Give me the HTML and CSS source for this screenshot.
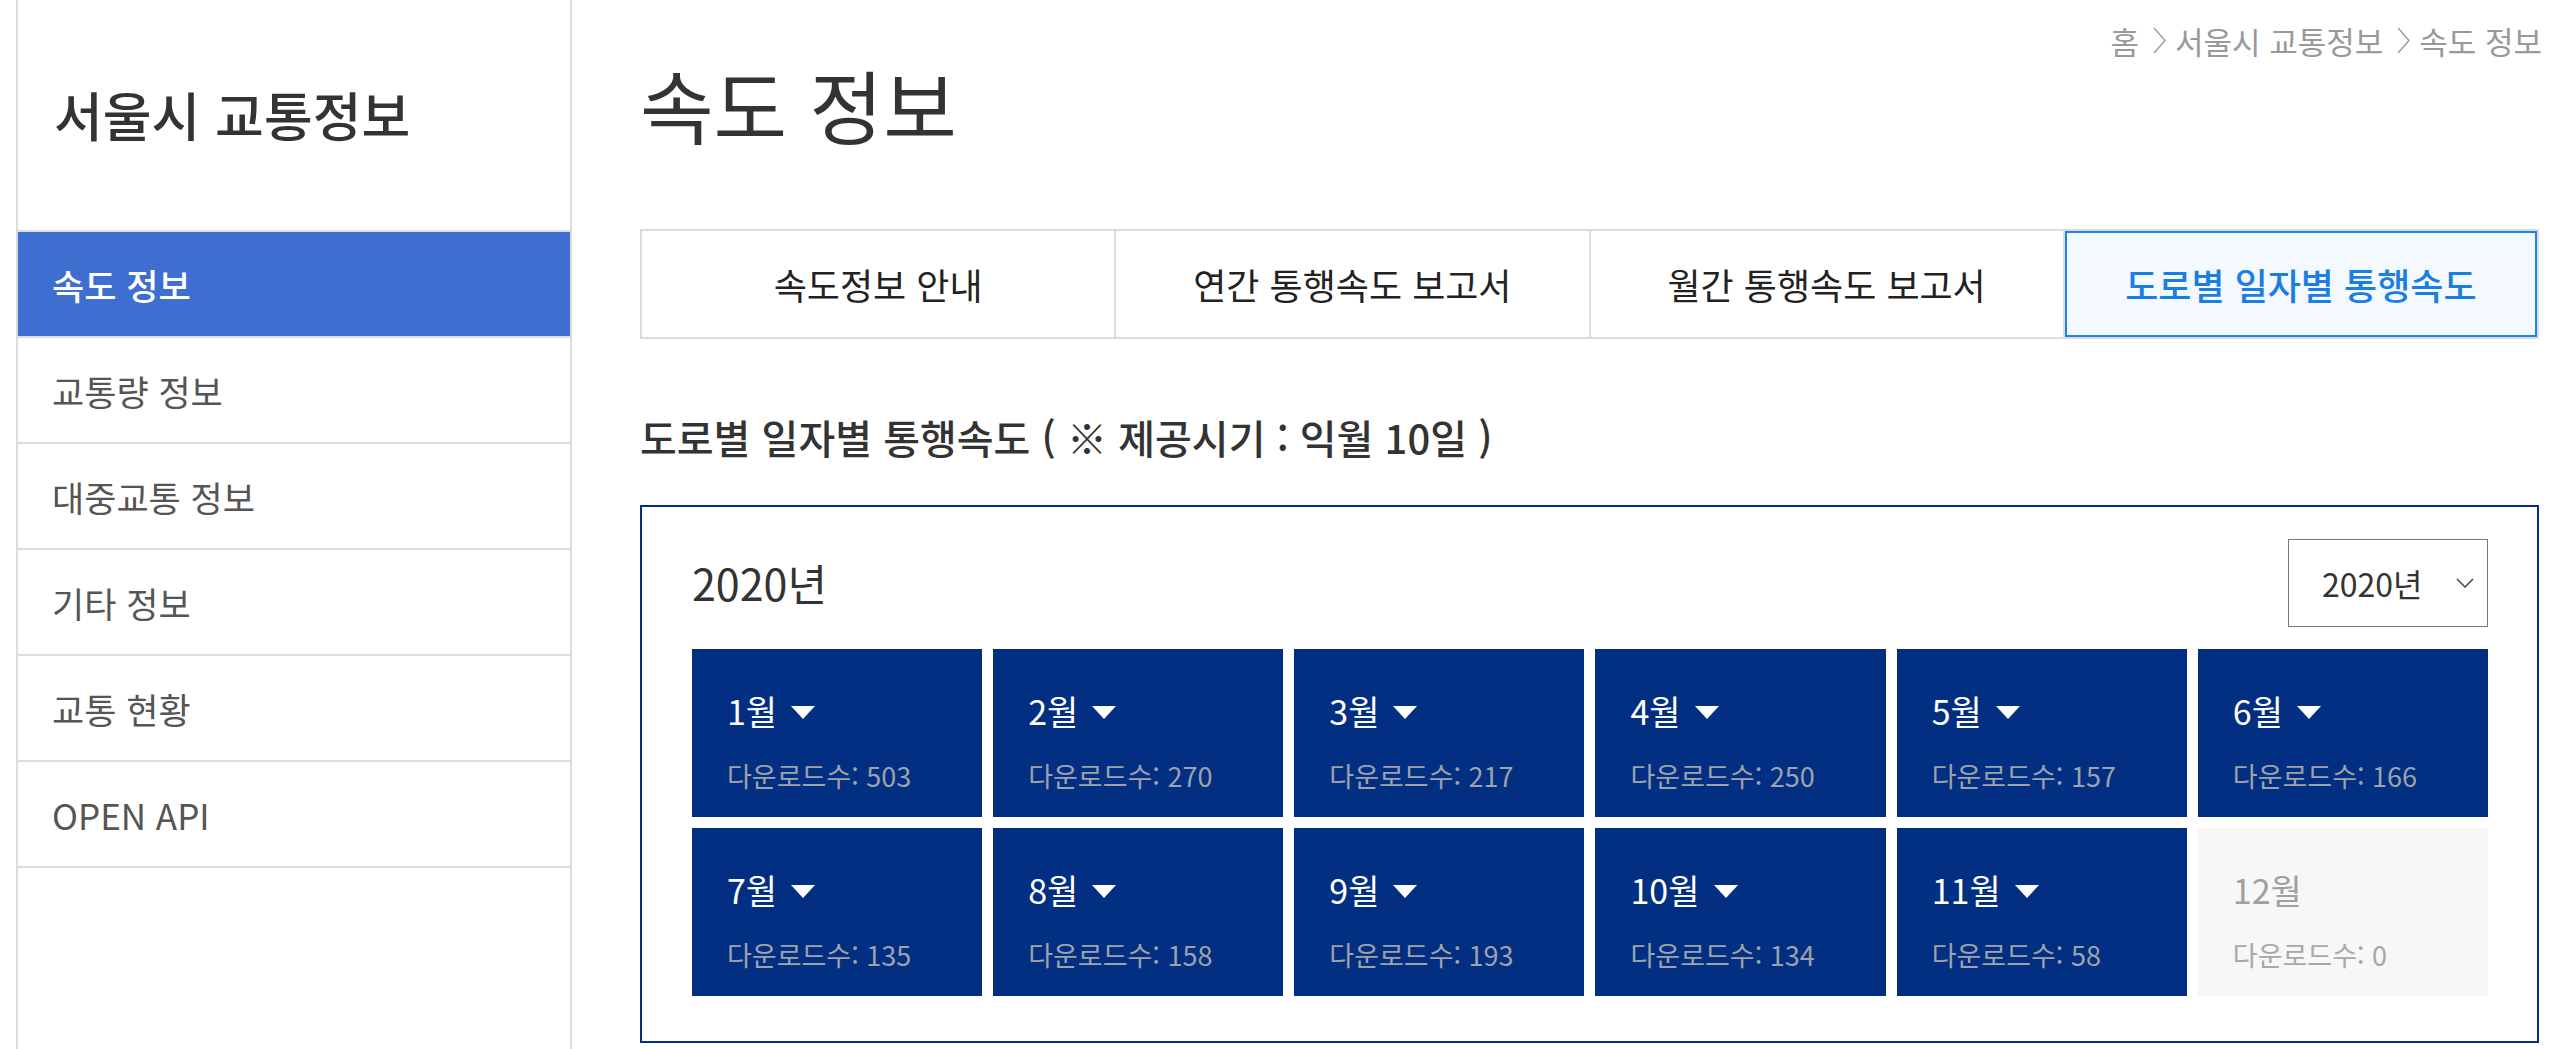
FILE: index.html
```html
<!DOCTYPE html>
<html lang="ko">
<head>
<meta charset="utf-8">
<title>속도 정보 - 서울시 교통정보</title>
<link rel="stylesheet" href="styles.css">
</head>
<body>
<div class="page">
  <aside class="sidebar">
    <div class="side-title"><h2>서울시 교통정보</h2></div>
    <ul class="side-menu">
      <li class="active">속도 정보</li>
      <li>교통량 정보</li>
      <li>대중교통 정보</li>
      <li>기타 정보</li>
      <li>교통 현황</li>
      <li>OPEN API</li>
    </ul>
  </aside>
  <main class="main">
    <div class="head">
      <h1>속도 정보</h1>
      <nav class="crumbs">
        <span>홈</span>
        <svg class="chev" width="13" height="27" viewBox="0 0 13 27"><polyline points="1,1 12,13.5 1,26" fill="none" stroke="#9a9a9a" stroke-width="1.4"/></svg>
        <span>서울시 교통정보</span>
        <svg class="chev" width="13" height="27" viewBox="0 0 13 27"><polyline points="1,1 12,13.5 1,26" fill="none" stroke="#9a9a9a" stroke-width="1.4"/></svg>
        <span>속도 정보</span>
      </nav>
    </div>
    <div class="tabs">
      <div class="tab">속도정보 안내</div>
      <div class="tab">연간 통행속도 보고서</div>
      <div class="tab">월간 통행속도 보고서</div>
      <div class="tab active">도로별 일자별 통행속도</div>
    </div>
    <h3 class="sub">도로별 일자별 통행속도 ( ※ 제공시기 : 익월 10일 )</h3>
    <section class="box">
      <div class="box-head">
        <div class="year">2020년</div>
        <div class="select">
          <span>2020년</span>
          <svg width="18" height="10" viewBox="0 0 18 10"><polyline points="1,1 9,9 17,1" fill="none" stroke="#444" stroke-width="1.5"/></svg>
        </div>
      </div>
      <div class="months">
        <div class="card"><div class="m">1월<i class="tri"></i></div><div class="d">다운로드수: 503</div></div>
        <div class="card"><div class="m">2월<i class="tri"></i></div><div class="d">다운로드수: 270</div></div>
        <div class="card"><div class="m">3월<i class="tri"></i></div><div class="d">다운로드수: 217</div></div>
        <div class="card"><div class="m">4월<i class="tri"></i></div><div class="d">다운로드수: 250</div></div>
        <div class="card"><div class="m">5월<i class="tri"></i></div><div class="d">다운로드수: 157</div></div>
        <div class="card"><div class="m">6월<i class="tri"></i></div><div class="d">다운로드수: 166</div></div>
        <div class="card"><div class="m">7월<i class="tri"></i></div><div class="d">다운로드수: 135</div></div>
        <div class="card"><div class="m">8월<i class="tri"></i></div><div class="d">다운로드수: 158</div></div>
        <div class="card"><div class="m">9월<i class="tri"></i></div><div class="d">다운로드수: 193</div></div>
        <div class="card"><div class="m">10월<i class="tri"></i></div><div class="d">다운로드수: 134</div></div>
        <div class="card"><div class="m">11월<i class="tri"></i></div><div class="d">다운로드수: 58</div></div>
        <div class="card off"><div class="m">12월</div><div class="d">다운로드수: 0</div></div>
      </div>
    </section>
  </main>
</div>
</body>
</html>
```
FILE: styles.css
```css
* { box-sizing: border-box; }
html, body { margin: 0; padding: 0; }
body {
  font-family: "Noto Sans CJK KR", "Noto Sans", sans-serif;
  color: #333;
  background: #fff;
  overflow: hidden;
}
.page { display: flex; height: 1049px; }

.sidebar {
  margin-left: 16px;
  width: 556px;
  height: 100%;
  border-left: 2px solid #dcdcdc;
  border-right: 2px solid #dcdcdc;
  flex: none;
}
.side-title {
  height: 230px;
  display: flex;
  align-items: center;
  padding-left: 36px;
}
.side-title h2 {
  margin: 0;
  font-size: 53px;
  font-weight: 500;
  line-height: 1.2;
  color: #333;
}
.side-menu { list-style: none; margin: 0; padding: 0; border-top: 2px solid #dcdcdc; }
.side-menu li {
  height: 106px;
  border-bottom: 2px solid #dcdcdc;
  display: flex;
  align-items: center;
  padding-left: 34px;
  font-size: 35px;
  color: #555;
}
.side-menu li.active { background: #3e6ecf; color: #fff; font-weight: 500; }

.main { margin-left: 68px; width: 1899px; flex: none; }
.head { display: flex; justify-content: space-between; align-items: flex-start; }
.head h1 {
  margin: 55px 0 0;
  font-size: 80px;
  font-weight: 400;
  line-height: 1.2;
  color: #333;
}
.crumbs {
  margin-top: 22px;
  margin-right: -3px;
  display: flex;
  align-items: center;
  font-size: 31px;
  line-height: 1.2;
  color: #999;
}
.chev { margin: 0 9px 0 14px; }

.tabs {
  margin-top: 78px;
  display: flex;
  height: 110px;
  border: 2px solid #dcdcdc;
}
.tab {
  flex: 1;
  display: flex;
  align-items: center;
  justify-content: center;
  font-size: 36px;
  color: #222;
  border-left: 2px solid #dcdcdc;
}
.tab:first-child { border-left: 0; }
.tab.active {
  background: #f4f8ff;
  box-shadow: inset 0 0 0 2px #1a86e8;
  color: #1a7ee2;
  font-weight: 500;
}

.sub {
  margin: 70px 0 0;
  font-size: 40px;
  font-weight: 500;
  line-height: 1.4;
  color: #333;
}

.box {
  margin-top: 40px;
  border: 2px solid #032f86;
  padding: 32px 49px 45px 50px;
}
.box-head { display: flex; justify-content: space-between; align-items: center; height: 88px; }
.year { font-size: 43px; color: #333; line-height: 1.2; }
.select {
  width: 200px;
  height: 88px;
  border: 1px solid #777;
  display: flex;
  align-items: center;
  justify-content: space-between;
  padding: 0 13px 0 33px;
  font-size: 32px;
  color: #333;
}

.months {
  margin-top: 22px;
  display: grid;
  grid-template-columns: repeat(6, 1fr);
  gap: 11px;
}
.card {
  height: 168px;
  background: #022f82;
  padding: 42px 35px 0;
}
.card .m {
  display: flex;
  align-items: center;
  font-size: 34px;
  line-height: 1.2;
  color: #fff;
}
.tri {
  margin: 3px 0 0 14px;
  width: 0;
  height: 0;
  border-left: 12.5px solid transparent;
  border-right: 12.5px solid transparent;
  border-top: 13px solid #fff;
}
.card .d {
  margin-top: 28px;
  font-size: 27px;
  line-height: 1.2;
  color: #9ea2aa;
}
.card.off { background: #f7f7f7; }
.card.off .m { color: #a0a0a0; }
.card.off .d { color: #a8a8a8; }
```
